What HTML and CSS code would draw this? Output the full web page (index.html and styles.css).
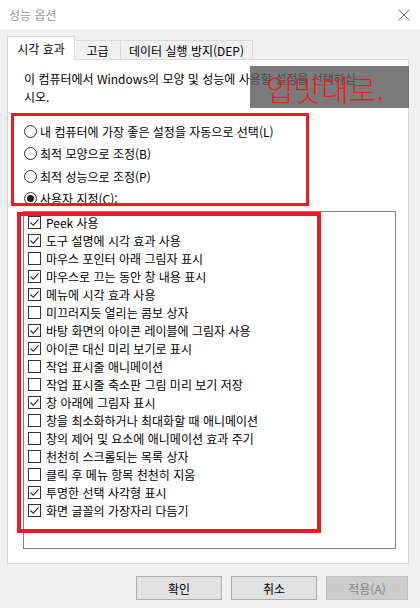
FILE: index.html
```html
<!DOCTYPE html>
<html lang="ko">
<head>
    <meta charset="UTF-8">
    <title>성능 옵션</title>
    <link rel="stylesheet" href="styles.css">
</head>
<body>

<div class="titlebar">
    <span class="title">성능 옵션</span>
    <svg class="close" width="12" height="12" viewBox="0 0 12 12">
        <path d="M0.5 0.5 L11.5 11.5 M11.5 0.5 L0.5 11.5" stroke="#6e6e6e" stroke-width="1" fill="none"/>
    </svg>
</div>

<div class="tabs">
    <div class="tab active">시각 효과</div>
    <div class="tab tab-adv">고급</div>
    <div class="tab tab-dep">데이터 실행 방지(DEP)</div>
</div>

<div class="panel">
    <p class="desc">이 컴퓨터에서 Windows의 모양 및 성능에 사용할 설정을 선택하십<br>시오.</p>

    <div class="radios">
        <div class="radio-row"><span class="radio"></span>내 컴퓨터에 가장 좋은 설정을 자동으로 선택(L)</div>
        <div class="radio-row"><span class="radio"></span>최적 모양으로 조정(B)</div>
        <div class="radio-row"><span class="radio"></span>최적 성능으로 조정(P)</div>
        <div class="radio-row"><span class="radio on"></span>사용자 지정(C):</div>
    </div>

    <div class="listbox">
        <div class="item"><span class="cb on"></span>Peek 사용</div>
        <div class="item"><span class="cb on"></span>도구 설명에 시각 효과 사용</div>
        <div class="item"><span class="cb"></span>마우스 포인터 아래 그림자 표시</div>
        <div class="item"><span class="cb on"></span>마우스로 끄는 동안 창 내용 표시</div>
        <div class="item"><span class="cb on"></span>메뉴에 시각 효과 사용</div>
        <div class="item"><span class="cb"></span>미끄러지듯 열리는 콤보 상자</div>
        <div class="item"><span class="cb on"></span>바탕 화면의 아이콘 레이블에 그림자 사용</div>
        <div class="item"><span class="cb on"></span>아이콘 대신 미리 보기로 표시</div>
        <div class="item"><span class="cb"></span>작업 표시줄 애니메이션</div>
        <div class="item"><span class="cb"></span>작업 표시줄 축소판 그림 미리 보기 저장</div>
        <div class="item"><span class="cb on"></span>창 아래에 그림자 표시</div>
        <div class="item"><span class="cb"></span>창을 최소화하거나 최대화할 때 애니메이션</div>
        <div class="item"><span class="cb"></span>창의 제어 및 요소에 애니메이션 효과 주기</div>
        <div class="item"><span class="cb"></span>천천히 스크롤되는 목록 상자</div>
        <div class="item"><span class="cb"></span>클릭 후 메뉴 항목 천천히 지움</div>
        <div class="item"><span class="cb on"></span>투명한 선택 사각형 표시</div>
        <div class="item"><span class="cb on"></span>화면 글꼴의 가장자리 다듬기</div>
    </div>

    <!-- annotations drawn over the dialog -->
    <div class="mark mark-radios"></div>
    <div class="mark mark-list"></div>
    <div class="stamp">입맛대로.</div>
</div>

<div class="buttons">
    <button class="btn">확인</button>
    <button class="btn">취소</button>
    <button class="btn btn-apply" disabled>적용(A)</button>
</div>

</body>
</html>
```

FILE: styles.css
```css
body {
    margin: 0;
    background-color: #f0f0f0;
    font-family: "Noto Sans CJK KR", "Liberation Sans", sans-serif;
    font-size: 12px;
    color: #000;
}

.titlebar {
    height: 29px;
    background-color: #fff;
    display: flex;
    align-items: center;
    justify-content: space-between;
    padding: 0 10px 0 9px;
}
.title {
    color: #999;
    font-size: 12px;
}

.tabs {
    display: flex;
    align-items: flex-end;
    height: 24px;
    margin: 7px 0 -1px 7px;
}
.tab {
    height: 20px;
    line-height: 19px;
    box-sizing: border-box;
    border: 1px solid #d9d9d9;
    border-bottom: none;
    background-color: #f0f0f0;
    text-align: center;
    margin-left: -1px;
}
.tab.active {
    width: 68px;
    height: 24px;
    line-height: 24px;
    margin-left: 0;
    background-color: #fff;
    position: relative;
    z-index: 1;
}
.tab-adv { width: 47px; }
.tab-dep { width: 133px; }

.panel {
    position: relative;
    width: 402px;
    height: 505px;
    box-sizing: border-box;
    margin-left: 7px;
    background-color: #fff;
    border: 1px solid #d9d9d9;
}

.desc {
    margin: 0;
    padding: 10px 0 0 16px;
    line-height: 18px;
}

.radios {
    margin-top: 14px;
    padding-left: 16px;
}
.radio-row {
    height: 22.5px;
    display: flex;
    align-items: center;
}
.radio {
    width: 13px;
    height: 13px;
    box-sizing: border-box;
    border: 1px solid #333;
    border-radius: 50%;
    margin-right: 3px;
    display: flex;
    align-items: center;
    justify-content: center;
}
.radio.on::after {
    content: "";
    width: 7px;
    height: 7px;
    border-radius: 50%;
    background-color: #222;
}

.listbox {
    margin: 1px 12px 0 15px;
    height: 338px;
    box-sizing: border-box;
    border: 1px solid #828282;
    padding: 1px 0 0 4px;
}
.item {
    height: 18px;
    display: flex;
    align-items: center;
}
.cb {
    width: 13px;
    height: 13px;
    box-sizing: border-box;
    border: 1px solid #333;
    margin-right: 5px;
    background-color: #fff;
}
.cb.on {
    background-image: url("data:image/svg+xml,%3Csvg xmlns='http://www.w3.org/2000/svg' width='11' height='11' viewBox='0 0 11 11'%3E%3Cpath d='M1.5 5.5 L4.3 8.3 L9.5 2.3' stroke='%23222' stroke-width='1.1' fill='none'/%3E%3C/svg%3E");
    background-repeat: no-repeat;
}

.mark {
    position: absolute;
    box-sizing: border-box;
    border: 3px solid #ec1c24;
}
.mark-radios {
    left: 3px;
    top: 53px;
    width: 298px;
    height: 93px;
}
.mark-list {
    left: 9px;
    top: 152px;
    width: 304px;
    height: 321px;
    border-width: 4px;
}

.stamp {
    position: absolute;
    left: 242px;
    top: 6px;
    width: 159px;
    height: 42px;
    box-sizing: border-box;
    padding-left: 16px;
    background-color: rgba(90, 90, 90, 0.8);
    color: #ec1c24;
    font-size: 30px;
    font-weight: 300;
    line-height: 44px;
}

.buttons {
    display: flex;
    justify-content: flex-end;
    gap: 9px;
    margin-top: 12px;
    padding-right: 12px;
}
.btn {
    width: 86px;
    height: 24px;
    background-color: #e1e1e1;
    border: 1px solid #adadad;
    font-family: inherit;
    font-size: 12px;
    color: #000;
    padding: 0;
}
.btn-apply {
    width: 82px;
}
.btn:disabled {
    background-color: #cccccc;
    border-color: #bfbfbf;
    color: #838383;
}
```
